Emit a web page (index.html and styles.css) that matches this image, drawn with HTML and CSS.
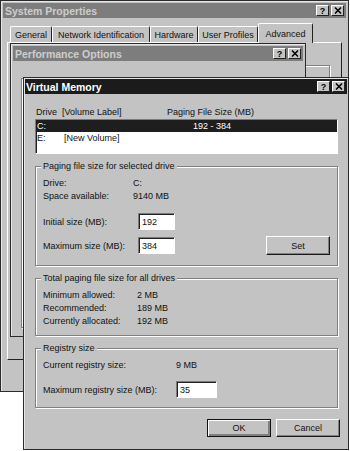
FILE: index.html
```html
<!DOCTYPE html>
<html lang="en">
  <head>
    <meta charset="UTF-8" />
    <title>Virtual Memory</title>
    <link rel="stylesheet" href="styles.css">
  </head>
  <body>
    <div class="desk">
      <section class="win sys">
        <div class="title off">
          <span>System Properties</span>
          <div class="tbtns">
            <span class="tbtn">?</span>
            <span class="tbtn"><svg width="8" height="7" viewBox="0 0 8 7"><path d="M1 .5L7 6.5M7 .5L1 6.5" stroke="#000" stroke-width="1.5"/></svg></span>
          </div>
        </div>
        <div class="tabs">
          <span class="tab w-gen">General</span>
          <span class="tab w-net">Network Identification</span>
          <span class="tab w-hw">Hardware</span>
          <span class="tab w-up">User Profiles</span>
          <span class="tab sel w-adv">Advanced</span>
        </div>
        <div class="tabpanel">
          <div class="adv-group"></div>
        </div>
      </section>

      <section class="win perf">
        <div class="title off">
          <span>Performance Options</span>
          <div class="tbtns">
            <span class="tbtn">?</span>
            <span class="tbtn"><svg width="8" height="7" viewBox="0 0 8 7"><path d="M1 .5L7 6.5M7 .5L1 6.5" stroke="#000" stroke-width="1.5"/></svg></span>
          </div>
        </div>
        <div class="perf-body">
          <div class="perf-group"></div>
        </div>
      </section>

      <section class="win vm">
        <div class="title on">
          <span>Virtual Memory</span>
          <div class="tbtns">
            <span class="tbtn">?</span>
            <span class="tbtn"><svg width="8" height="7" viewBox="0 0 8 7"><path d="M1 .5L7 6.5M7 .5L1 6.5" stroke="#000" stroke-width="1.5"/></svg></span>
          </div>
        </div>
        <div class="vm-body">
          <div class="list-head">
            <span class="c-drive">Drive</span>
            <span class="c-label">[Volume Label]</span>
            <span>Paging File Size (MB)</span>
          </div>
          <div class="listbox">
            <div class="row sel"><span>C:</span><span></span><span>192 - 384</span></div>
            <div class="row"><span>E:</span><span>[New Volume]</span><span></span></div>
          </div>

          <div class="grp g-drive">
            <span class="grp-title">Paging file size for selected drive</span>
            <div class="info">
              <span>Drive:</span><span>C:</span>
              <span>Space available:</span><span>9140 MB</span>
            </div>
            <div class="field-row first">
              <label class="flabel">Initial size (MB):</label>
              <span class="field">192</span>
            </div>
            <div class="field-row second">
              <label class="flabel">Maximum size (MB):</label>
              <span class="field">384</span>
              <button class="btn set">Set</button>
            </div>
          </div>

          <div class="grp g-total">
            <span class="grp-title">Total paging file size for all drives</span>
            <div class="info">
              <span>Minimum allowed:</span><span>2 MB</span>
              <span>Recommended:</span><span>189 MB</span>
              <span>Currently allocated:</span><span>192 MB</span>
            </div>
          </div>

          <div class="grp g-reg">
            <span class="grp-title">Registry size</span>
            <div class="info">
              <span>Current registry size:</span><span>9 MB</span>
            </div>
            <div class="field-row">
              <label class="flabel">Maximum registry size (MB):</label>
              <span class="field">35</span>
            </div>
          </div>

          <div class="actions">
            <button class="btn default">OK</button>
            <button class="btn">Cancel</button>
          </div>
        </div>
      </section>
    </div>
  </body>
</html>
```

FILE: styles.css
```css
* {
  box-sizing: border-box;
}
body {
  margin: 0;
  background: #fff;
  font-family: "Liberation Sans", Arial, sans-serif;
  font-size: 9px;
  color: #111;
}
.desk {
  position: relative;
  width: 350px;
  height: 451px;
  overflow: hidden;
}

/* windows */
.win {
  position: absolute;
  display: flex;
  flex-direction: column;
  background: #c3c3c3;
  border: 1px solid #2a2a2a;
  box-shadow: inset 1px 1px 0 #e6e6e6;
}
.sys {
  left: 0;
  top: 0;
  width: 349px;
  height: 392px;
  padding: 2px;
}
.perf {
  left: 10px;
  top: 43px;
  width: 296px;
  height: 294px;
  padding: 2px;
}
.vm {
  left: 23px;
  top: 77px;
  width: 326px;
  height: 373px;
  padding: 1px;
}

.title {
  flex: none;
  display: flex;
  align-items: center;
  height: 15px;
  padding: 0 2px 0 2px;
  font-size: 10.5px;
  font-weight: bold;
}
.title.off {
  background: #7d7d7d;
  color: #cdcdcd;
}
.title.on {
  background: #1b1b1b;
  color: #fff;
  padding-left: 1px;
}
.tbtns {
  display: flex;
  gap: 2px;
  margin-left: auto;
}
.tbtn {
  display: flex;
  align-items: center;
  justify-content: center;
  width: 13px;
  height: 11px;
  background: #c3c3c3;
  border: 1px solid;
  border-color: #fff #222 #222 #fff;
  color: #000;
  font-size: 9px;
  font-weight: bold;
}

/* tabs of the back window */
.tabs {
  flex: none;
  display: flex;
  align-items: flex-end;
  height: 24px;
  padding-left: 7px;
}
.tab {
  display: flex;
  align-items: center;
  justify-content: center;
  height: 16px;
  border: 1px solid;
  border-bottom: none;
  border-color: #fff #222 #222 #fff;
  border-radius: 2px 2px 0 0;
  color: #111;
}
.tab.sel {
  position: relative;
  height: 20px;
  margin-bottom: -1px;
  background: #c3c3c3;
}
.w-gen { width: 42px; }
.w-net { width: 98px; }
.w-hw { width: 48px; }
.w-up { width: 60px; }
.w-adv { width: 55px; }

.tabpanel {
  height: 318px;
  margin: 0 4px;
  border: 1px solid;
  border-color: #fff #222 #222 #fff;
  padding: 22px 11px 0 12px;
}
.adv-group {
  height: 250px;
  border: 1px solid #808080;
  box-shadow: inset 1px 1px 0 #fff, 1px 1px 0 #fff;
}

.perf-body {
  flex: 1;
  padding: 17px 20px 6px 8px;
}
.perf-group {
  height: 100%;
  border: 1px solid #808080;
  box-shadow: inset 1px 1px 0 #fff, 1px 1px 0 #fff;
}

/* virtual memory dialog */
.vm-body {
  flex: 1;
  display: flex;
  flex-direction: column;
  padding: 0 9px 0 10px;
}
.list-head {
  display: flex;
  margin-top: 13px;
  padding-left: 1px;
  line-height: 11px;
}
.c-drive { width: 26px; }
.c-label { width: 105px; }

.listbox {
  height: 35px;
  margin-top: 1px;
  background: #fff;
  border: 1px solid;
  border-color: #7a7a7a #fff #fff #7a7a7a;
  box-shadow: inset 1px 1px 0 #222;
}
.row {
  display: grid;
  grid-template-columns: 27px 129px 1fr;
  height: 12px;
  line-height: 12px;
  padding-left: 1px;
}
.row.sel {
  background: #1e1e1e;
  color: #fff;
}

.grp {
  display: flex;
  flex-direction: column;
  margin-top: 12px;
  border: 1px solid #808080;
  box-shadow: inset 1px 1px 0 #fff, 1px 1px 0 #fff;
  padding: 0 7px 10px 7px;
}
.grp-title {
  align-self: flex-start;
  margin: -6px 0 0 -2px;
  padding: 0 2px;
  background: #c3c3c3;
  line-height: 11px;
}
.info {
  display: grid;
  grid-template-columns: 90px 1fr;
  margin-top: 5px;
  line-height: 13px;
}
.g-total .info {
  grid-template-columns: 94px 1fr;
}
.g-total {
  padding-bottom: 7px;
}
.g-reg .info {
  grid-template-columns: 133px 1fr;
}
.g-reg {
  padding-bottom: 9px;
}

.field-row {
  display: flex;
  align-items: center;
}
.field-row.first {
  margin-top: 10px;
}
.field-row.second {
  margin-top: 6px;
}
.g-reg .field-row {
  margin-top: 9px;
}
.flabel {
  width: 95px;
}
.g-reg .flabel {
  width: 133px;
}
.field {
  display: flex;
  align-items: center;
  width: 37px;
  height: 17px;
  padding-left: 3px;
  background: #fff;
  border: 1px solid;
  border-color: #7a7a7a #fff #fff #7a7a7a;
  box-shadow: inset 1px 1px 0 #222;
}
.g-reg .field {
  width: 41px;
}

.btn {
  display: flex;
  align-items: center;
  justify-content: center;
  width: 64px;
  height: 18px;
  padding: 0;
  background: #c3c3c3;
  border: 1px solid;
  border-color: #fff #1a1a1a #1a1a1a #fff;
  box-shadow: inset -1px -1px 0 #808080;
  font: inherit;
  color: #111;
}
.btn.set {
  height: 19px;
  margin-left: auto;
}
.btn.default {
  border-color: #111;
  box-shadow: inset 1px 1px 0 #fff, inset -2px -2px 0 #808080;
}
.actions {
  display: flex;
  justify-content: flex-end;
  gap: 5px;
  margin: 11px -2px 0 0;
}
```
